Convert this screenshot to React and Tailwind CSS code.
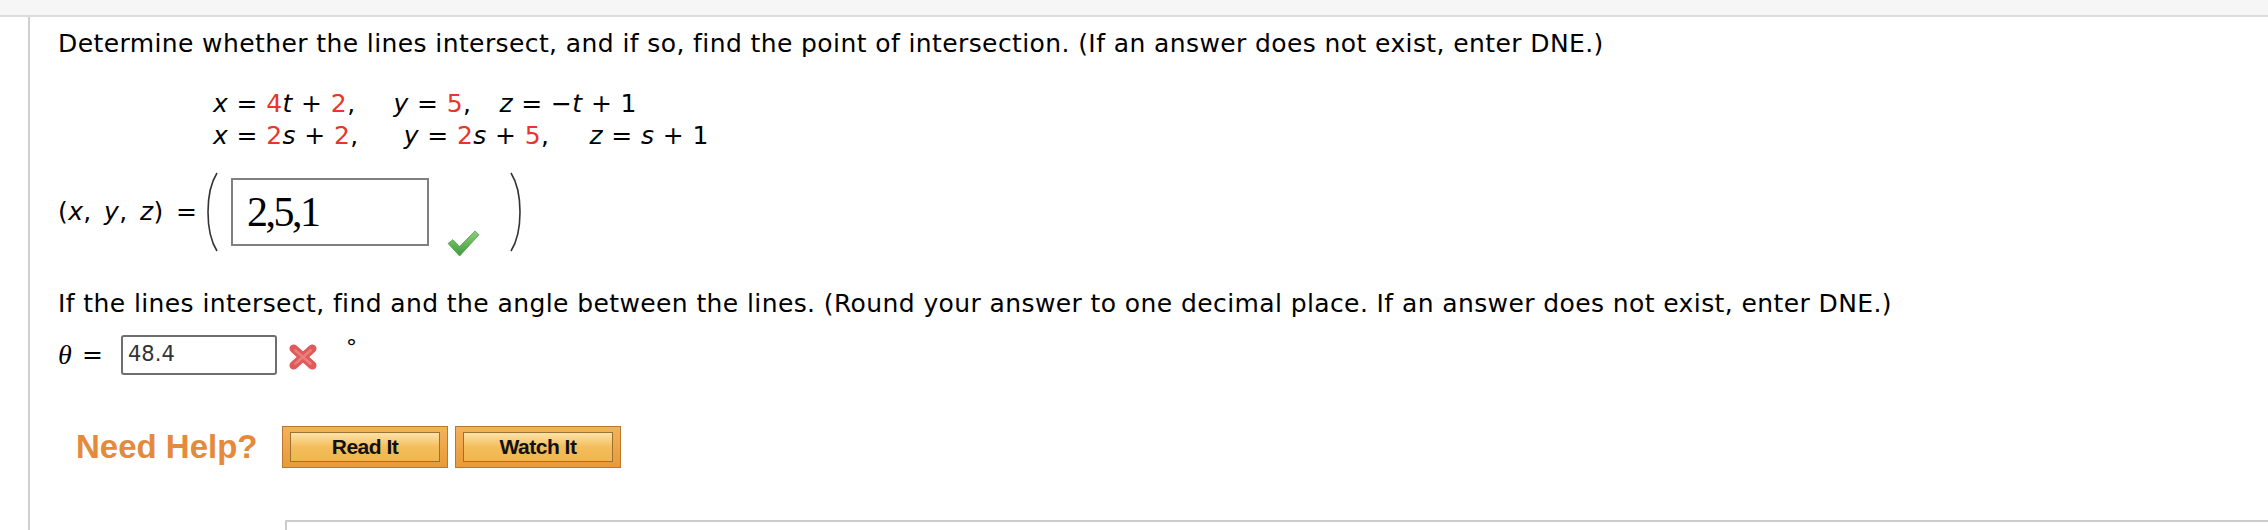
import React from "react";

const R = ({ children }) => <span className="text-[#e5372a] not-italic">{children}</span>;
const V = ({ children }) => <span className="italic">{children}</span>;

function BigParen({ right }) {
  return (
    <svg width="17" height="80" viewBox="0 0 17 80" className="shrink-0">
      {right ? (
        <path d="M3 1 C 15 20, 15 60, 3 79" fill="none" stroke="#333" strokeWidth="1.6" />
      ) : (
        <path d="M14 1 C 2 20, 2 60, 14 79" fill="none" stroke="#333" strokeWidth="1.6" />
      )}
    </svg>
  );
}

function Check() {
  return (
    <svg width="33" height="27" viewBox="0 0 34 28">
      <defs>
        <linearGradient id="cg" x1="0" y1="0" x2="0" y2="1">
          <stop offset="0" stopColor="#8fd07a" />
          <stop offset="1" stopColor="#3f9a3a" />
        </linearGradient>
      </defs>
      <path d="M1 14 L6 10 L13 17 L29 1 L33 5 L13 27 Z" fill="url(#cg)" stroke="#4a9a45" strokeWidth="0.8" strokeLinejoin="round" />
    </svg>
  );
}

function Cross() {
  return (
    <svg width="30" height="28" viewBox="0 0 32 30">
      <g stroke="#e05a5a" strokeWidth="9" strokeLinecap="round">
        <line x1="6" y1="6" x2="26" y2="24" />
        <line x1="26" y1="6" x2="6" y2="24" />
      </g>
      <g stroke="#f08c8c" strokeWidth="3" strokeLinecap="round" opacity="0.7">
        <line x1="8" y1="8" x2="24" y2="22" />
        <line x1="24" y1="8" x2="8" y2="22" />
      </g>
    </svg>
  );
}

function HelpButton({ label }) {
  return (
    <div className="h-[42px] w-[166px] border border-[#b7792f] bg-gradient-to-b from-[#f3b25a] to-[#e99a36] px-[7px] py-[5px]">
      <div className="h-full w-full border border-[#9c7136] bg-gradient-to-b from-[#fde3a6] via-[#f3bd5a] to-[#f1b64d] flex items-center justify-center">
        <span className="font-['Liberation_Sans',sans-serif] font-bold text-[21px] text-[#111] tracking-[-0.5px]">{label}</span>
      </div>
    </div>
  );
}

export default function App() {
  return (
    <div className="w-[2268px] h-[530px] bg-white overflow-hidden font-['DejaVu_Sans',sans-serif] text-[25px] tracking-[0.4px] text-black">
      <div className="h-[17px] bg-[#f6f6f6] border-b-2 border-[#dcdcdc]" />
      <div className="ml-[28px] h-[513px] border-l-2 border-[#d0d0d0] pl-[28px] pt-[11px]">
        <div className="leading-[32px] whitespace-nowrap">
          Determine whether the lines intersect, and if so, find the point of intersection. (If an answer does not exist, enter DNE.)
        </div>

        <div className="mt-[28px] pl-[155px] leading-[32px] whitespace-nowrap">
          <div className="flex">
            <span><V>x</V> = <R>4</R><V>t</V> + <R>2</R>,</span>
            <span className="ml-[38px]"><V>y</V> = <R>5</R>,</span>
            <span className="ml-[28px]"><V>z</V> = −<V>t</V> + 1</span>
          </div>
          <div className="flex">
            <span><V>x</V> = <R>2</R><V>s</V> + <R>2</R>,</span>
            <span className="ml-[45px]"><V>y</V> = <R>2</R><V>s</V> + <R>5</R>,</span>
            <span className="ml-[40px]"><V>z</V> = <V>s</V> + 1</span>
          </div>
        </div>

        <div className="mt-[20px] flex items-center h-[80px]">
          <span className="w-[145px] shrink-0 whitespace-nowrap [word-spacing:4px]">(<V>x</V>, <V>y</V>, <V>z</V>) =</span>
          <BigParen />
          <div className="ml-[11px] w-[198px] h-[68px] shrink-0 border-2 border-[#808080] flex items-center pl-[14px]">
            <span className="font-['Liberation_Serif',serif] text-[42px] tracking-[-2.5px] leading-none">2,5,1</span>
          </div>
          <div className="ml-[18px] self-end -mb-[5px]"><Check /></div>
          <div className="ml-[28px]"><BigParen right /></div>
        </div>

        <div className="mt-[36px] leading-[32px] whitespace-nowrap">
          If the lines intersect, find and the angle between the lines. (Round your answer to one decimal place. If an answer does not exist, enter DNE.)
        </div>

        <div className="mt-[15px] flex items-center h-[40px]">
          <span className="w-[24px] font-['Liberation_Serif',serif] italic text-[28px] tracking-normal">θ</span>
          <span className="w-[39px]">=</span>
          <div className="w-[156px] h-[40px] shrink-0 border-2 border-[#6e6e6e] rounded-[3px] flex items-center pl-[5px]">
            <span className="text-[21px] tracking-normal text-[#333]">48.4</span>
          </div>
          <div className="ml-[11px] mt-[4px]"><Cross /></div>
          <span className="ml-[28px] self-start -mt-[4px] text-[22px]">°</span>
        </div>

        <div className="mt-[51px] flex items-center h-[42px]">
          <span className="ml-[18px] w-[206px] shrink-0 font-['Liberation_Sans',sans-serif] font-bold text-[33px] text-[#e58a3a] tracking-[0px]">Need Help?</span>
          <HelpButton label="Read It" />
          <div className="ml-[7px]"><HelpButton label="Watch It" /></div>
        </div>

        <div className="mt-[52px] ml-[227px] h-[40px] border-t-2 border-l-2 border-[#cccccc]" />
      </div>
    </div>
  );
}
